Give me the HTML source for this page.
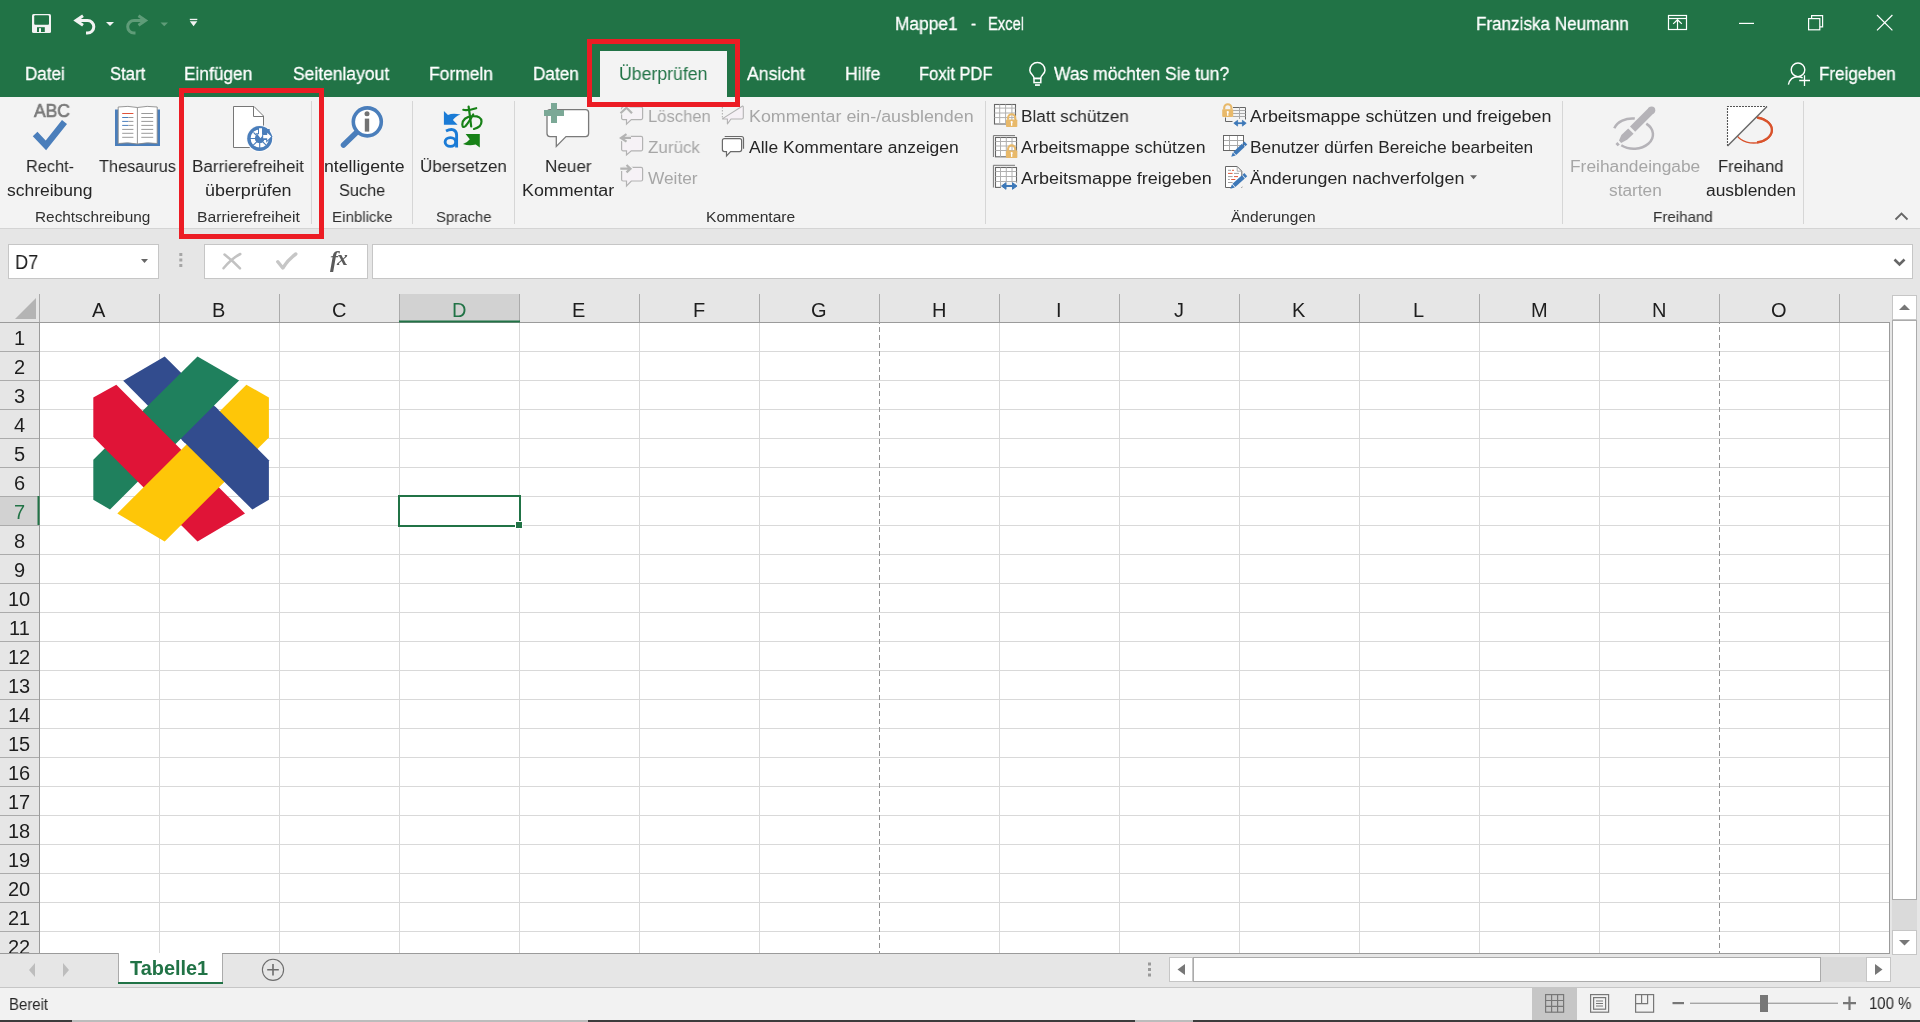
<!DOCTYPE html>
<html><head><meta charset="utf-8"><title>Mappe1 - Excel</title>
<style>
html,body{margin:0;padding:0;}
body{width:1920px;height:1022px;overflow:hidden;position:relative;background:#fff;font-family:"Liberation Sans",sans-serif;}
.r{position:absolute;}
.t{position:absolute;white-space:nowrap;line-height:1;transform-origin:0 0;will-change:transform;}
svg.ic{position:absolute;left:0;top:0;}
</style></head><body>
<div class="r" style="left:0px;top:0px;width:1920px;height:97px;background:#217346;"></div>
<div class="r" style="left:0px;top:97px;width:1920px;height:131px;background:#f3f3f3;"></div>
<div class="r" style="left:0px;top:228px;width:1920px;height:1px;background:#d4d4d4;"></div>
<div class="r" style="left:0px;top:229px;width:1920px;height:66px;background:#e6e6e6;"></div>
<div class="r" style="left:600px;top:51px;width:127px;height:46px;background:#f3f3f3;"></div>
<div class="t" style="left:894.80px;top:14.92px;font-size:18.41px;color:#ffffff;transform:scaleX(0.9423);-webkit-text-stroke:0.3px #fff;">Mappe1</div>
<div class="t" style="left:970.80px;top:14.92px;font-size:18.41px;color:#ffffff;transform:scaleX(0.8109);-webkit-text-stroke:0.3px #fff;">-</div>
<div class="t" style="left:988.20px;top:14.92px;font-size:18.41px;color:#ffffff;transform:scaleX(0.8000);-webkit-text-stroke:0.3px #fff;">Excel</div>
<div class="t" style="left:1475.60px;top:15.02px;font-size:18.41px;color:#ffffff;transform:scaleX(0.9276);-webkit-text-stroke:0.3px #fff;">Franziska Neumann</div>
<div class="t" style="left:25.00px;top:64.66px;font-size:18.12px;color:#ffffff;transform:scaleX(0.9397);-webkit-text-stroke:0.3px #fff;">Datei</div>
<div class="t" style="left:109.75px;top:64.66px;font-size:18.12px;color:#ffffff;transform:scaleX(0.9222);-webkit-text-stroke:0.3px #fff;">Start</div>
<div class="t" style="left:184.20px;top:64.66px;font-size:18.12px;color:#ffffff;transform:scaleX(0.9545);-webkit-text-stroke:0.3px #fff;">Einfügen</div>
<div class="t" style="left:292.60px;top:64.66px;font-size:18.12px;color:#ffffff;transform:scaleX(0.9646);-webkit-text-stroke:0.3px #fff;">Seitenlayout</div>
<div class="t" style="left:428.50px;top:64.66px;font-size:18.12px;color:#ffffff;transform:scaleX(0.9641);-webkit-text-stroke:0.3px #fff;">Formeln</div>
<div class="t" style="left:532.50px;top:64.66px;font-size:18.12px;color:#ffffff;transform:scaleX(0.9469);-webkit-text-stroke:0.3px #fff;">Daten</div>
<div class="t" style="left:747.30px;top:64.66px;font-size:18.12px;color:#ffffff;transform:scaleX(0.9744);-webkit-text-stroke:0.3px #fff;">Ansicht</div>
<div class="t" style="left:844.70px;top:64.66px;font-size:18.12px;color:#ffffff;transform:scaleX(0.9743);-webkit-text-stroke:0.3px #fff;">Hilfe</div>
<div class="t" style="left:919.40px;top:64.66px;font-size:18.12px;color:#ffffff;transform:scaleX(0.9140);-webkit-text-stroke:0.3px #fff;">Foxit PDF</div>
<div class="t" style="left:1053.50px;top:64.66px;font-size:18.12px;color:#ffffff;transform:scaleX(0.9652);-webkit-text-stroke:0.3px #fff;">Was möchten Sie tun?</div>
<div class="t" style="left:1818.75px;top:64.66px;font-size:18.12px;color:#ffffff;transform:scaleX(0.9404);-webkit-text-stroke:0.3px #fff;">Freigeben</div>
<div class="t" style="left:618.90px;top:64.66px;font-size:18.12px;color:#217346;transform:scaleX(0.9761);">Überprüfen</div>
<div class="t" style="left:33.50px;top:101.55px;font-size:18.84px;color:#7a7a7a;transform:scaleX(0.9298);-webkit-text-stroke:0.7px #7a7a7a;">ABC</div>
<div class="t" style="left:26.00px;top:157.70px;font-size:17.25px;color:#262626;transform:scaleX(0.9451);">Recht-</div>
<div class="t" style="left:6.60px;top:181.50px;font-size:17.25px;color:#262626;transform:scaleX(1.0126);">schreibung</div>
<div class="t" style="left:34.50px;top:209.00px;font-size:15.36px;color:#303030;">Rechtschreibung</div>
<div class="t" style="left:99.00px;top:157.70px;font-size:17.25px;color:#262626;transform:scaleX(0.9449);">Thesaurus</div>
<div class="t" style="left:191.90px;top:157.70px;font-size:17.25px;color:#262626;transform:scaleX(0.9891);">Barrierefreiheit</div>
<div class="t" style="left:204.70px;top:181.50px;font-size:17.25px;color:#262626;transform:scaleX(1.0373);">überprüfen</div>
<div class="t" style="left:196.80px;top:209.00px;font-size:15.36px;color:#303030;transform:scaleX(1.0221);">Barrierefreiheit</div>
<div class="t" style="left:324.30px;top:157.70px;font-size:17.25px;color:#262626;transform:scaleX(1.0249);">ntelligente</div>
<div class="t" style="left:338.80px;top:181.50px;font-size:17.25px;color:#262626;transform:scaleX(0.9449);">Suche</div>
<div class="t" style="left:331.50px;top:209.00px;font-size:15.36px;color:#303030;transform:scaleX(0.9846);">Einblicke</div>
<div class="t" style="left:419.80px;top:157.70px;font-size:17.25px;color:#262626;transform:scaleX(0.9851);">Übersetzen</div>
<div class="t" style="left:435.60px;top:209.00px;font-size:15.36px;color:#303030;transform:scaleX(0.9699);">Sprache</div>
<div class="t" style="left:544.80px;top:157.70px;font-size:17.25px;color:#262626;transform:scaleX(0.9894);">Neuer</div>
<div class="t" style="left:521.90px;top:181.50px;font-size:17.25px;color:#262626;transform:scaleX(1.0341);">Kommentar</div>
<div class="t" style="left:647.60px;top:107.60px;font-size:17.25px;color:#a6a6a6;transform:scaleX(0.9633);">Löschen</div>
<div class="t" style="left:647.60px;top:138.70px;font-size:17.25px;color:#a6a6a6;transform:scaleX(0.9853);">Zurück</div>
<div class="t" style="left:647.60px;top:169.70px;font-size:17.25px;color:#a6a6a6;transform:scaleX(1.0021);">Weiter</div>
<div class="t" style="left:748.70px;top:107.60px;font-size:17.25px;color:#a6a6a6;transform:scaleX(1.0365);">Kommentar ein-/ausblenden</div>
<div class="t" style="left:748.70px;top:138.70px;font-size:17.25px;color:#262626;transform:scaleX(1.0128);">Alle Kommentare anzeigen</div>
<div class="t" style="left:705.80px;top:209.00px;font-size:15.36px;color:#303030;transform:scaleX(1.0142);">Kommentare</div>
<div class="t" style="left:1020.90px;top:107.60px;font-size:17.25px;color:#262626;transform:scaleX(0.9953);">Blatt schützen</div>
<div class="t" style="left:1020.90px;top:138.70px;font-size:17.25px;color:#262626;transform:scaleX(1.0232);">Arbeitsmappe schützen</div>
<div class="t" style="left:1020.90px;top:169.70px;font-size:17.25px;color:#262626;transform:scaleX(1.0417);">Arbeitsmappe freigeben</div>
<div class="t" style="left:1249.60px;top:107.60px;font-size:17.25px;color:#262626;transform:scaleX(1.0375);">Arbeitsmappe schützen und freigeben</div>
<div class="t" style="left:1249.60px;top:138.70px;font-size:17.25px;color:#262626;transform:scaleX(1.0046);">Benutzer dürfen Bereiche bearbeiten</div>
<div class="t" style="left:1249.60px;top:169.70px;font-size:17.25px;color:#262626;transform:scaleX(1.0346);">Änderungen nachverfolgen</div>
<div class="t" style="left:1231.30px;top:209.00px;font-size:15.36px;color:#303030;transform:scaleX(1.0116);">Änderungen</div>
<div class="t" style="left:1569.80px;top:157.70px;font-size:17.25px;color:#a6a6a6;transform:scaleX(1.0059);">Freihandeingabe</div>
<div class="t" style="left:1608.50px;top:181.50px;font-size:17.25px;color:#a6a6a6;transform:scaleX(1.0021);">starten</div>
<div class="t" style="left:1718.20px;top:157.70px;font-size:17.25px;color:#262626;transform:scaleX(0.9612);">Freihand</div>
<div class="t" style="left:1705.60px;top:181.50px;font-size:17.25px;color:#262626;transform:scaleX(1.0094);">ausblenden</div>
<div class="t" style="left:1652.80px;top:209.00px;font-size:15.36px;color:#303030;transform:scaleX(0.9867);">Freihand</div>
<div class="r" style="left:8px;top:244px;width:151px;height:35px;background:#fff;box-sizing:border-box;border:1px solid #c6c6c6;"></div>
<div class="r" style="left:204px;top:244px;width:164px;height:35px;background:#fff;box-sizing:border-box;border:1px solid #c6c6c6;"></div>
<div class="r" style="left:372px;top:244px;width:1541px;height:35px;background:#fff;box-sizing:border-box;border:1px solid #c6c6c6;"></div>
<div class="t" style="left:329.5px;top:247px;font-family:'Liberation Serif';font-style:italic;font-weight:bold;font-size:24px;color:#5a5a5a;">f</div>
<div class="t" style="left:337px;top:247.5px;font-family:'Liberation Serif';font-style:italic;font-weight:bold;font-size:21.5px;color:#5a5a5a;">x</div>
<div class="t" style="left:15.00px;top:253.19px;font-size:19.86px;color:#1e1e1e;transform:scaleX(0.9207);">D7</div>
<div class="r" style="left:0px;top:294px;width:1920px;height:29px;background:#e6e6e6;"></div>
<div class="r" style="left:40px;top:323px;width:1849px;height:630px;background:#ffffff;"></div>
<div class="r" style="left:0px;top:323px;width:39px;height:630px;background:#e6e6e6;"></div>
<div class="r" style="left:399px;top:294px;width:120px;height:28px;background:#d2d2d2;"></div>
<div class="r" style="left:0px;top:496px;width:39px;height:29px;background:#d2d2d2;"></div>
<div class="t" style="left:92.30px;top:299.77px;font-size:20.00px;color:#1e1e1e;">A</div>
<div class="t" style="left:212.35px;top:299.77px;font-size:20.00px;color:#1e1e1e;">B</div>
<div class="t" style="left:331.80px;top:299.77px;font-size:20.00px;color:#1e1e1e;">C</div>
<div class="t" style="left:451.80px;top:299.77px;font-size:20.00px;color:#217346;">D</div>
<div class="t" style="left:572.35px;top:299.77px;font-size:20.00px;color:#1e1e1e;">E</div>
<div class="t" style="left:692.90px;top:299.77px;font-size:20.00px;color:#1e1e1e;">F</div>
<div class="t" style="left:811.20px;top:299.77px;font-size:20.00px;color:#1e1e1e;">G</div>
<div class="t" style="left:931.80px;top:299.77px;font-size:20.00px;color:#1e1e1e;">H</div>
<div class="t" style="left:1056.20px;top:299.77px;font-size:20.00px;color:#1e1e1e;">I</div>
<div class="t" style="left:1174.00px;top:299.77px;font-size:20.00px;color:#1e1e1e;">J</div>
<div class="t" style="left:1292.35px;top:299.77px;font-size:20.00px;color:#1e1e1e;">K</div>
<div class="t" style="left:1413.45px;top:299.77px;font-size:20.00px;color:#1e1e1e;">L</div>
<div class="t" style="left:1530.65px;top:299.77px;font-size:20.00px;color:#1e1e1e;">M</div>
<div class="t" style="left:1651.80px;top:299.77px;font-size:20.00px;color:#1e1e1e;">N</div>
<div class="t" style="left:1771.20px;top:299.77px;font-size:20.00px;color:#1e1e1e;">O</div>
<div class="t" style="left:13.95px;top:327.67px;font-size:20.00px;color:#1e1e1e;">1</div>
<div class="t" style="left:13.95px;top:356.67px;font-size:20.00px;color:#1e1e1e;">2</div>
<div class="t" style="left:13.95px;top:385.67px;font-size:20.00px;color:#1e1e1e;">3</div>
<div class="t" style="left:13.95px;top:414.67px;font-size:20.00px;color:#1e1e1e;">4</div>
<div class="t" style="left:13.95px;top:443.67px;font-size:20.00px;color:#1e1e1e;">5</div>
<div class="t" style="left:13.95px;top:472.67px;font-size:20.00px;color:#1e1e1e;">6</div>
<div class="t" style="left:13.95px;top:501.67px;font-size:20.00px;color:#217346;">7</div>
<div class="t" style="left:13.95px;top:530.67px;font-size:20.00px;color:#1e1e1e;">8</div>
<div class="t" style="left:13.95px;top:559.67px;font-size:20.00px;color:#1e1e1e;">9</div>
<div class="t" style="left:8.40px;top:588.67px;font-size:20.00px;color:#1e1e1e;">10</div>
<div class="t" style="left:9.10px;top:617.67px;font-size:20.00px;color:#1e1e1e;">11</div>
<div class="t" style="left:8.40px;top:646.67px;font-size:20.00px;color:#1e1e1e;">12</div>
<div class="t" style="left:8.40px;top:675.67px;font-size:20.00px;color:#1e1e1e;">13</div>
<div class="t" style="left:8.40px;top:704.67px;font-size:20.00px;color:#1e1e1e;">14</div>
<div class="t" style="left:8.40px;top:733.67px;font-size:20.00px;color:#1e1e1e;">15</div>
<div class="t" style="left:8.40px;top:762.67px;font-size:20.00px;color:#1e1e1e;">16</div>
<div class="t" style="left:8.40px;top:791.67px;font-size:20.00px;color:#1e1e1e;">17</div>
<div class="t" style="left:8.40px;top:820.67px;font-size:20.00px;color:#1e1e1e;">18</div>
<div class="t" style="left:8.40px;top:849.67px;font-size:20.00px;color:#1e1e1e;">19</div>
<div class="t" style="left:8.40px;top:878.67px;font-size:20.00px;color:#1e1e1e;">20</div>
<div class="t" style="left:8.40px;top:907.67px;font-size:20.00px;color:#1e1e1e;">21</div>
<div class="t" style="left:8.40px;top:936.67px;font-size:20.00px;color:#1e1e1e;">22</div>
<div class="r" style="left:1890px;top:295px;width:30px;height:660px;background:#e6e6e6;"></div>
<div class="r" style="left:1892px;top:295px;width:25px;height:25px;background:#fff;box-sizing:border-box;border:1px solid #c6c6c6;"></div>
<div class="r" style="left:1892px;top:320px;width:25px;height:580px;background:#fff;box-sizing:border-box;border:1px solid #ababab;"></div>
<div class="r" style="left:1892px;top:900px;width:25px;height:30px;background:#dadada;"></div>
<div class="r" style="left:1892px;top:930px;width:25px;height:25px;background:#fff;box-sizing:border-box;border:1px solid #c6c6c6;"></div>
<div class="r" style="left:0px;top:953px;width:1890px;height:35px;background:#e6e6e6;"></div>
<div class="r" style="left:1890px;top:955px;width:30px;height:33px;background:#e6e6e6;"></div>
<div class="r" style="left:118px;top:953px;width:105px;height:31px;background:#fff;box-sizing:border-box;border-left:1px solid #ababab;border-right:1px solid #ababab;"></div>
<div class="r" style="left:118px;top:982px;width:105px;height:2px;background:#217346;"></div>
<div class="t" style="left:130.20px;top:958.52px;font-size:19.71px;color:#217346;font-weight:bold;transform:scaleX(1.0108);">Tabelle1</div>
<div class="r" style="left:1169px;top:957px;width:24px;height:25px;background:#fff;box-sizing:border-box;border:1px solid #c6c6c6;"></div>
<div class="r" style="left:1193px;top:957px;width:628px;height:25px;background:#fff;box-sizing:border-box;border:1px solid #ababab;"></div>
<div class="r" style="left:1821px;top:957px;width:45px;height:25px;background:#dadada;"></div>
<div class="r" style="left:1866px;top:957px;width:25px;height:25px;background:#fff;box-sizing:border-box;border:1px solid #c6c6c6;"></div>
<div class="r" style="left:0px;top:988px;width:1920px;height:32px;background:#f2f2f2;"></div>
<div class="t" style="left:9.00px;top:995.58px;font-size:16.09px;color:#262626;transform:scaleX(0.9289);">Bereit</div>
<div class="r" style="left:1532px;top:988px;width:45px;height:32px;background:#c6c6c6;"></div>
<div class="t" style="left:1869.30px;top:995.71px;font-size:15.94px;color:#262626;transform:scaleX(0.9381);">100 %</div>
<div class="r" style="left:0px;top:1020px;width:1920px;height:2px;background:#3c3c3c;"></div>
<div class="r" style="left:72px;top:1020px;width:516px;height:2px;background:#bcbcbc;"></div>
<div class="r" style="left:1135px;top:1020px;width:58px;height:2px;background:#bcbcbc;"></div>
<svg class="ic" width="1920" height="1022">
<g fill="#f3f3f3">
<rect x="32" y="14" width="19" height="19" rx="1.5"/>
<rect x="34.2" y="15.2" width="14.8" height="9.6" rx="1" fill="#217346"/>
<rect x="37" y="27.2" width="7.8" height="4.8" fill="#217346"/>
<rect x="39" y="28.2" width="2" height="3.8"/>
</g>
<g fill="none" stroke="#f3f3f3" stroke-width="3">
<path d="M83 15.8 L76 20.5 L83 25.2"/><path d="M76 20.5 H87.5 A6.3 6.3 0 0 1 87.5 33.1 H86"/>
</g>
<polygon points="106,22 114,22 110,26" fill="#f3f3f3"/>
<g fill="none" stroke="#5f9c78" stroke-width="3">
<path d="M138.5 15.8 L145.5 20.5 L138.5 25.2"/><path d="M145.5 20.5 H134 A6.3 6.3 0 0 0 134 33.1 H135.5"/>
</g>
<polygon points="160.5,22.5 168,22.5 164.25,26.2" fill="#5f9c78"/>
<rect x="189.8" y="18.8" width="7.5" height="1.3" fill="#f3f3f3"/><polygon points="189.8,21.3 197.3,21.3 193.55,26.3" fill="#f3f3f3"/>
<g fill="none" stroke="#ffffff" stroke-width="1.2">
<rect x="1668.5" y="15.5" width="18" height="14"/><line x1="1668" y1="18.5" x2="1687" y2="18.5"/>
<path d="M1677.5 29.5 V19.8 M1673.2 23.9 L1677.5 19.7 L1681.8 23.9"/>
<line x1="1739" y1="23.4" x2="1754" y2="23.4"/>
<rect x="1808.6" y="18.6" width="11.2" height="11.2"/><path d="M1811.6 18.6 V15.6 H1822.6 V26.8 H1819.8"/>
<path d="M1877 15 L1892.4 30.4 M1892.4 15 L1877 30.4"/>
</g>
<g fill="none" stroke="#ffffff" stroke-width="1.5">
<path d="M1034.2 78.4 C1034 75.5 1029.8 73.8 1029.8 70.2 A7.6 7.6 0 1 1 1045 70.2 C1045 73.8 1040.8 75.5 1040.6 78.4 Z"/>
<rect x="1034" y="78.4" width="6.8" height="4.2"/>
<rect x="1035" y="84.2" width="4.9" height="1.7" fill="#fff" stroke="none"/>
</g>
<g fill="none" stroke="#ffffff" stroke-width="1.4">
<circle cx="1798" cy="69.8" r="6.8"/><path d="M1788.4 84.6 C1789.5 80 1793 76.8 1797.8 76.8 C1799.8 76.8 1801.3 77.2 1802.6 77.9"/>
<path d="M1804.5 75.2 V86 M1799.2 80.5 H1810" stroke-width="1.3"/>
</g>
<line x1="311.5" y1="101" x2="311.5" y2="224" stroke="#d6d6d6" stroke-width="1"/>
<line x1="412.5" y1="101" x2="412.5" y2="224" stroke="#d6d6d6" stroke-width="1"/>
<line x1="514.5" y1="101" x2="514.5" y2="224" stroke="#d6d6d6" stroke-width="1"/>
<line x1="985.5" y1="101" x2="985.5" y2="224" stroke="#d6d6d6" stroke-width="1"/>
<line x1="1562.5" y1="101" x2="1562.5" y2="224" stroke="#d6d6d6" stroke-width="1"/>
<line x1="1803.5" y1="101" x2="1803.5" y2="224" stroke="#d6d6d6" stroke-width="1"/>
<polyline points="35.1,134 45.9,145.4 64.5,122" fill="none" stroke="#4a7ebb" stroke-width="6.4" stroke-linejoin="miter"/>
<rect x="115" y="109.5" width="45" height="36.5" fill="#4a7ebb"/>
<path d="M118.2 107 Q128 105.5 137.4 107.5 Q147 105.5 157.2 107 V143.5 Q147 142 137.4 144 Q128 142 118.2 143.5 Z" fill="#fff" stroke="#8a8a8a" stroke-width="0.9"/>
<line x1="137.4" y1="107.5" x2="137.4" y2="144" stroke="#8a8a8a" stroke-width="0.9"/>
<line x1="122.2" y1="113.5" x2="133.4" y2="113.5" stroke="#e0533a" stroke-width="1"/>
<line x1="141.3" y1="113.5" x2="153.2" y2="113.5" stroke="#9a9a9a" stroke-width="1"/>
<line x1="122.2" y1="117.5" x2="128.5" y2="117.5" stroke="#4a7ebb" stroke-width="1"/><line x1="128.5" y1="117.5" x2="133.4" y2="117.5" stroke="#9a9a9a" stroke-width="1"/>
<line x1="141.3" y1="117.5" x2="153.2" y2="117.5" stroke="#9a9a9a" stroke-width="1"/>
<line x1="122.2" y1="121.4" x2="128.5" y2="121.4" stroke="#4a7ebb" stroke-width="1"/><line x1="128.5" y1="121.4" x2="133.4" y2="121.4" stroke="#9a9a9a" stroke-width="1"/>
<line x1="141.3" y1="121.4" x2="153.2" y2="121.4" stroke="#9a9a9a" stroke-width="1"/>
<line x1="122.2" y1="125.4" x2="128.5" y2="125.4" stroke="#4a7ebb" stroke-width="1"/><line x1="128.5" y1="125.4" x2="133.4" y2="125.4" stroke="#9a9a9a" stroke-width="1"/>
<line x1="141.3" y1="125.4" x2="153.2" y2="125.4" stroke="#9a9a9a" stroke-width="1"/>
<line x1="122.2" y1="129.4" x2="133.4" y2="129.4" stroke="#9a9a9a" stroke-width="1"/>
<line x1="141.3" y1="129.4" x2="153.2" y2="129.4" stroke="#9a9a9a" stroke-width="1"/>
<line x1="122.2" y1="133.3" x2="133.4" y2="133.3" stroke="#9a9a9a" stroke-width="1"/>
<line x1="141.3" y1="133.3" x2="153.2" y2="133.3" stroke="#9a9a9a" stroke-width="1"/>
<line x1="122.2" y1="137.3" x2="133.4" y2="137.3" stroke="#9a9a9a" stroke-width="1"/>
<line x1="141.3" y1="137.3" x2="153.2" y2="137.3" stroke="#9a9a9a" stroke-width="1"/>
<path d="M233.5 106.5 H254 L263.5 116 V147.5 H233.5 Z" fill="#fff" stroke="#777" stroke-width="1"/>
<path d="M253.5 106.5 V116.5 H263.5" fill="none" stroke="#777" stroke-width="1"/>
<circle cx="259.7" cy="138.5" r="13.5" fill="#fbfbfb"/>
<circle cx="259.7" cy="138.5" r="12.5" fill="#4a7ebb"/>
<circle cx="259.7" cy="138.5" r="6.9" fill="none" stroke="#fff" stroke-width="4.4"/>
<rect x="260.2" y="129" width="9.5" height="7.5" fill="#4a7ebb"/>
<path d="M250 138.5 H256 M253.5 132.4 L256 135.2 M253.3 145.2 L257 141.5 M259.7 142.5 V148 M266.1 145.2 L262.4 141.5 M262.8 139.4 H268.8" stroke="#4a7ebb" stroke-width="1.1" fill="none"/>
<circle cx="259.7" cy="138.5" r="4.6" fill="#4a7ebb"/>
<path d="M259 128.3 H262 V134.3 H263.6 L260.5 138.2 L257.4 134.3 H259 Z" fill="#fff" stroke="#4a7ebb" stroke-width="2" paint-order="stroke"/>
<path d="M263.2 134.9 H267.2 V132.8 L271.2 136.6 L267.2 140.4 V138.2 H263.2 Z" fill="#fff" stroke="#4a7ebb" stroke-width="2" paint-order="stroke"/>
<line x1="343.5" y1="145" x2="357.5" y2="131.5" stroke="#4a7ebb" stroke-width="5.5" stroke-linecap="round"/>
<circle cx="367.3" cy="121.85" r="14" fill="#fff" stroke="#4a7ebb" stroke-width="3.6"/>
<circle cx="367" cy="113.8" r="2.5" fill="#737373"/><rect x="364.8" y="118.6" width="4.4" height="13" fill="#737373"/>
<path d="M443.9 111.1 L448 115 Q452.5 112.6 460.5 114.5 Q455 116.5 452.9 120.1 L457.6 124.7 H443.9 Z" fill="#1a7bd6"/>
<path d="M446 131 Q450 129 453.5 129.8 Q456.6 131 456.6 135 V147.5" fill="none" stroke="#1a7bd6" stroke-width="2.9"/>
<ellipse cx="450.4" cy="142" rx="5.3" ry="4.4" fill="none" stroke="#1a7bd6" stroke-width="2.9"/>
<path d="M465.6 134 H479.8 V147.5 L475.7 144.6 Q469 146.2 463 144.1 Q467.6 142.2 469.8 139.2 Z" fill="#178117"/>
<g fill="none" stroke="#178117" stroke-width="2.2" stroke-linecap="round">
<path d="M463.3 109.8 Q467 111 476.2 108.2"/><path d="M468.6 106.5 Q470 116 471.2 126.5"/>
<path d="M473.2 114.5 Q469 122 465.6 126 Q462.5 128.5 462.3 124.5 Q462.8 117 472.5 116.2 Q481.5 115.8 481.5 121.5 Q481.5 127 474 129"/>
</g>
<path d="M550 109.6 H585.6 A3 3 0 0 1 588.6 112.6 V133.6 A3 3 0 0 1 585.6 136.6 H566 L556.3 146.5 V136.6 H550 A3 3 0 0 1 547 133.6 V112.6 A3 3 0 0 1 550 109.6 Z" fill="#fff" stroke="#7a7a7a" stroke-width="1.3"/>
<path d="M551 103 H557 V110 H564 V116 H557 V123 H551 V116 H544 V110 H551 Z" fill="#7ba896"/>
<path d="M623.1 107 H641.1 A1.5 1.5 0 0 1 642.6 108.5 V118.1 A1.5 1.5 0 0 1 641.1 119.6 H631.3 L626.5 124.2 V119.6 H623.1 A1.5 1.5 0 0 1 621.6 118.1 V108.5 A1.5 1.5 0 0 1 623.1 107 Z" fill="#f6f2f6" stroke="#b3b3b3" stroke-width="1.2"/>
<path d="M620.5 113.3 L626.5 107.8 L632 113.3" fill="none" stroke="#f3f3f3" stroke-width="4.6"/>
<path d="M620.5 113.3 L626.5 107.8 L632 113.3" fill="none" stroke="#b3b3b3" stroke-width="2.2"/>
<path d="M623.1 136.4 H641.1 A1.5 1.5 0 0 1 642.6 137.9 V149.3 A1.5 1.5 0 0 1 641.1 150.8 H631.3 L626.5 155 V150.8 H623.1 A1.5 1.5 0 0 1 621.6 149.3 V137.9 A1.5 1.5 0 0 1 623.1 136.4 Z" fill="#f6f2f6" stroke="#b3b3b3" stroke-width="1.2"/>
<path d="M631 137.9 H621 M626.5 134.2 L621 137.9 L626.5 141.6" fill="none" stroke="#f3f3f3" stroke-width="4.6"/>
<path d="M631 137.9 H621 M626.5 134.2 L621 137.9 L626.5 141.6" fill="none" stroke="#b3b3b3" stroke-width="2.2"/>
<path d="M623.1 167.4 H641.1 A1.5 1.5 0 0 1 642.6 168.9 V179.5 A1.5 1.5 0 0 1 641.1 181 H631.3 L626.5 186 V181 H623.1 A1.5 1.5 0 0 1 621.6 179.5 V168.9 A1.5 1.5 0 0 1 623.1 167.4 Z" fill="#f6f2f6" stroke="#b3b3b3" stroke-width="1.2"/>
<path d="M620.3 168.7 H630.5 M626.5 165 L630.5 168.7 L626.5 172.4" fill="none" stroke="#f3f3f3" stroke-width="4.6"/>
<path d="M620.3 168.7 H630.5 M626.5 165 L630.5 168.7 L626.5 172.4" fill="none" stroke="#b3b3b3" stroke-width="2.2"/>
<path d="M722.6 118.6 L742.6 106 A1 1 0 0 1 743.3 107 V117.5 A1.5 1.5 0 0 1 741.8 119 H731 L727.4 123.8 V119 H722.6 Z" fill="#f6f1f6" stroke="#b3b3b3" stroke-width="1.1" stroke-linejoin="round"/>
<path d="M722.4 107 V117.8" fill="none" stroke="#b3b3b3" stroke-width="1.1" stroke-dasharray="1.6 1.4"/>
<path d="M724.7 136.5 H741.5 A2 2 0 0 1 743.5 138.5 V148.8" fill="none" stroke="#6a6a6a" stroke-width="1.2"/>
<path d="M724.4 138.6 H739.6 A2 2 0 0 1 741.6 140.6 V149.6 A2 2 0 0 1 739.6 151.6 H730.6 L726.5 156 V151.6 H724.4 A2 2 0 0 1 722.4 149.6 V140.6 A2 2 0 0 1 724.4 138.6 Z" fill="#fff" stroke="#6a6a6a" stroke-width="1.2"/>
<rect x="994.5" y="104.5" width="21.0" height="19.5" fill="#fff" stroke="#666" stroke-width="1.1"/><line x1="999.7" y1="104.5" x2="999.7" y2="124" stroke="#b0b0b0" stroke-width="1"/><line x1="1005.6" y1="104.5" x2="1005.6" y2="124" stroke="#b0b0b0" stroke-width="1"/><line x1="1011.9" y1="104.5" x2="1011.9" y2="124" stroke="#b0b0b0" stroke-width="1"/><line x1="994.5" y1="108.1" x2="1015.5" y2="108.1" stroke="#b0b0b0" stroke-width="1"/><line x1="994.5" y1="113" x2="1015.5" y2="113" stroke="#b0b0b0" stroke-width="1"/><line x1="994.5" y1="117.6" x2="1015.5" y2="117.6" stroke="#b0b0b0" stroke-width="1"/>
<path d="M1008.1 119.7 V117.80000000000001 A3.55 3.55 0 0 1 1015.2 117.80000000000001 V119.7" fill="none" stroke="#e8b96a" stroke-width="2.1"/><rect x="1006" y="119.4" width="11.3" height="7.6" rx="0.8" fill="#e8b96a"/><rect x="1011" y="122.0" width="1.3" height="3.8" fill="#fff"/><circle cx="1011.65" cy="122.0" r="1.1" fill="#fff"/>
<path d="M993.4 157 V135.6 H1015" fill="none" stroke="#777" stroke-width="1"/>
<rect x="995.5" y="137.5" width="21.0" height="19.30000000000001" fill="#fff" stroke="#666" stroke-width="1.1"/><line x1="1000.5" y1="137.5" x2="1000.5" y2="156.8" stroke="#b0b0b0" stroke-width="1"/><line x1="1006.3" y1="137.5" x2="1006.3" y2="156.8" stroke="#b0b0b0" stroke-width="1"/><line x1="1012" y1="137.5" x2="1012" y2="156.8" stroke="#b0b0b0" stroke-width="1"/><line x1="995.5" y1="141.5" x2="1016.5" y2="141.5" stroke="#b0b0b0" stroke-width="1"/><line x1="995.5" y1="146" x2="1016.5" y2="146" stroke="#b0b0b0" stroke-width="1"/><line x1="995.5" y1="150.5" x2="1016.5" y2="150.5" stroke="#b0b0b0" stroke-width="1"/>
<path d="M1008.1 150.8 V148.9 A3.55 3.55 0 0 1 1015.2 148.9 V150.8" fill="none" stroke="#e8b96a" stroke-width="2.1"/><rect x="1006" y="150.5" width="11.3" height="7.6" rx="0.8" fill="#e8b96a"/><rect x="1011" y="153.1" width="1.3" height="3.8" fill="#fff"/><circle cx="1011.65" cy="153.1" r="1.1" fill="#fff"/>
<path d="M993.4 187.5 V165.3 H1015" fill="none" stroke="#777" stroke-width="1"/>
<rect x="995.5" y="167.5" width="21.0" height="19.900000000000006" fill="#fff" stroke="#666" stroke-width="1.1"/><line x1="1000.5" y1="167.5" x2="1000.5" y2="187.4" stroke="#b0b0b0" stroke-width="1"/><line x1="1006.3" y1="167.5" x2="1006.3" y2="187.4" stroke="#b0b0b0" stroke-width="1"/><line x1="1012" y1="167.5" x2="1012" y2="187.4" stroke="#b0b0b0" stroke-width="1"/><line x1="995.5" y1="171.5" x2="1016.5" y2="171.5" stroke="#b0b0b0" stroke-width="1"/><line x1="995.5" y1="176.5" x2="1016.5" y2="176.5" stroke="#b0b0b0" stroke-width="1"/><line x1="995.5" y1="181.5" x2="1016.5" y2="181.5" stroke="#b0b0b0" stroke-width="1"/>
<rect x="1001" y="182.5" width="16.5" height="7" fill="#f3f3f3"/>
<path d="M1002.5 186 H1016" stroke="#3d78b8" stroke-width="2" fill="none"/><path d="M1001.5 186 L1006.0 182.7 V189.3 Z M1017 186 L1012.5 182.7 V189.3 Z" fill="#3d78b8" stroke="#3d78b8" stroke-width="1" stroke-linejoin="round"/>
<path d="M1225.5 117.5 V121.5 H1232.5" fill="none" stroke="#666" stroke-width="1"/>
<path d="M1233 107.5 H1245.5 V119.5" fill="none" stroke="#666" stroke-width="1"/>
<path d="M1239.5 107.5 V119 M1233 110.5 H1245.5 M1233 113.5 H1245.5 M1233 116.5 H1245.5" fill="none" stroke="#aaa" stroke-width="1"/>
<path d="M1224.2 109.5 V107.8 A3.6 3.6 0 0 1 1231.4 107.8 V109.5" fill="none" stroke="#e8b96a" stroke-width="2.1"/>
<rect x="1222.2" y="109.3" width="11" height="7.6" rx="0.8" fill="#e8b96a"/>
<rect x="1227.1" y="112" width="1.3" height="3.8" fill="#fff"/><circle cx="1227.75" cy="112" r="1.1" fill="#fff"/>
<path d="M1235.5 123.2 H1244.5" stroke="#3d78b8" stroke-width="1.8" fill="none"/>
<path d="M1233.8 123.2 L1237.6 120.3 V126.1 Z M1246.2 123.2 L1242.4 120.3 V126.1 Z" fill="#3d78b8" stroke="#3d78b8" stroke-width="0.8" stroke-linejoin="round"/>
<rect x="1223.5" y="135.5" width="20" height="15" fill="#fff" stroke="#666" stroke-width="1"/>
<path d="M1229.5 136 V150 M1237.5 136 V150 M1224 140.5 H1243 M1224 145.5 H1243" fill="none" stroke="#aaa" stroke-width="1"/>
<polygon points="1232,157 1246.5,143.5 1246.5,150 1238,157" fill="#f3f3f3"/>
<g transform="translate(1231.2 156.8) rotate(-43.39)" fill="#3d78b8"><polygon points="0,0 4.2,-2.1 4.2,2.1"/><rect x="4.9" y="-2.1" width="11.89" height="4.2"/><rect x="17.49" y="-2.1" width="2.6" height="4.2"/></g>
<path d="M1225.5 166.5 H1237.2 L1241.8 171.2 V187.5 H1225.5 Z" fill="#fff" stroke="#666" stroke-width="1"/>
<path d="M1237.2 166.5 V171.2 H1241.8" fill="none" stroke="#999" stroke-width="0.8"/>
<line x1="1228" y1="170.3" x2="1231" y2="170.3" stroke="#a0a0a0" stroke-width="1"/>
<line x1="1232" y1="170.3" x2="1234" y2="170.3" stroke="#e05a3a" stroke-width="1"/>
<line x1="1228" y1="173.4" x2="1232.6" y2="173.4" stroke="#e05a3a" stroke-width="1"/>
<line x1="1234" y1="173.4" x2="1239" y2="173.4" stroke="#a0a0a0" stroke-width="1"/>
<line x1="1228" y1="176.6" x2="1232.6" y2="176.6" stroke="#a0a0a0" stroke-width="1"/>
<line x1="1234" y1="176.6" x2="1238" y2="176.6" stroke="#e05a3a" stroke-width="1"/>
<line x1="1228" y1="179.5" x2="1229.8" y2="179.5" stroke="#a0a0a0" stroke-width="1"/>
<line x1="1231.2" y1="179.5" x2="1235.3" y2="179.5" stroke="#e05a3a" stroke-width="1"/>
<line x1="1228" y1="182.5" x2="1232.6" y2="182.5" stroke="#a0a0a0" stroke-width="1"/>
<polygon points="1231,189 1246.5,174 1246.5,182 1240,189" fill="#f3f3f3"/>
<g transform="translate(1230.3 188.7) rotate(-42.29)" fill="#3d78b8"><polygon points="0,0 4.2,-2.1 4.2,2.1"/><rect x="4.9" y="-2.1" width="12.75" height="4.2"/><rect x="18.35" y="-2.1" width="2.6" height="4.2"/></g>
<polygon points="1470,175.3 1477,175.3 1473.5,179.3" fill="#666"/>
<path d="M1614.3 128.3 A19 14.2 0 0 1 1634.8 118.6" fill="none" stroke="#b5b3b8" stroke-width="2.5"/>
<path d="M1646.3 123.6 A19 14.2 0 1 1 1621.3 145.3" fill="none" stroke="#b5b3b8" stroke-width="2.5"/>
<line x1="1651.6" y1="110.2" x2="1631.9" y2="129.9" stroke="#f3f3f3" stroke-width="10"/>
<line x1="1651.6" y1="110.2" x2="1632.6" y2="129.2" stroke="#b5b3b8" stroke-width="7.4"/>
<circle cx="1651.6" cy="110.2" r="3.7" fill="#b5b3b8"/>
<polygon points="1628.2,128.4 1633.6,133.8 1627.1,139.8 1621.1,143.1 1619,140.6 1621.4,135" fill="#b5b3b8"/>
<polygon points="1617.4,142 1619.8,144.4 1617.6,146.3 1615.5,144.1" fill="#b5b3b8"/>
<ellipse cx="1753.8" cy="130" rx="18.6" ry="13" fill="none" stroke="#d9532c" stroke-width="1.3"/>
<path d="M1757 117.6 A18 12.6 0 0 1 1757 142.4" fill="none" stroke="#d9532c" stroke-width="2.2"/>
<polygon points="1727.5,106.5 1767,106.5 1727.5,146" fill="#fff"/>
<path d="M1727.5 146 V106.5 H1767" fill="none" stroke="#555" stroke-width="1.1" stroke-dasharray="2 1"/>
<line x1="1767" y1="106.5" x2="1727.5" y2="146" stroke="#666" stroke-width="1.5"/>
<path d="M1895.5 219.5 L1901.5 213.5 L1907.5 219.5" fill="none" stroke="#666" stroke-width="1.8"/>
<polygon points="141,259 148,259 144.5,263" fill="#666"/>
<rect x="179.3" y="253" width="3" height="3" fill="#a6a6a6"/>
<rect x="179.3" y="258.5" width="3" height="3" fill="#a6a6a6"/>
<rect x="179.3" y="264" width="3" height="3" fill="#a6a6a6"/>
<path d="M223.5 268.2 Q232 258 240.3 254 M224.5 254.5 Q233 261 240 268.3" fill="none" stroke="#c2c2c2" stroke-width="2.5" stroke-linecap="round"/>
<path d="M277.8 261.8 L282.8 268 Q288 259.5 295.8 254" fill="none" stroke="#c6c6c6" stroke-width="3.4" stroke-linecap="round" stroke-linejoin="round"/>
<path d="M1894.5 259.5 L1899.5 264.5 L1904.5 259.5" fill="none" stroke="#666" stroke-width="2.6"/>
<line x1="40" y1="351.5" x2="1889" y2="351.5" stroke="#d9d9d9" stroke-width="1"/>
<line x1="40" y1="380.5" x2="1889" y2="380.5" stroke="#d9d9d9" stroke-width="1"/>
<line x1="40" y1="409.5" x2="1889" y2="409.5" stroke="#d9d9d9" stroke-width="1"/>
<line x1="40" y1="438.5" x2="1889" y2="438.5" stroke="#d9d9d9" stroke-width="1"/>
<line x1="40" y1="467.5" x2="1889" y2="467.5" stroke="#d9d9d9" stroke-width="1"/>
<line x1="40" y1="496.5" x2="1889" y2="496.5" stroke="#d9d9d9" stroke-width="1"/>
<line x1="40" y1="525.5" x2="1889" y2="525.5" stroke="#d9d9d9" stroke-width="1"/>
<line x1="40" y1="554.5" x2="1889" y2="554.5" stroke="#d9d9d9" stroke-width="1"/>
<line x1="40" y1="583.5" x2="1889" y2="583.5" stroke="#d9d9d9" stroke-width="1"/>
<line x1="40" y1="612.5" x2="1889" y2="612.5" stroke="#d9d9d9" stroke-width="1"/>
<line x1="40" y1="641.5" x2="1889" y2="641.5" stroke="#d9d9d9" stroke-width="1"/>
<line x1="40" y1="670.5" x2="1889" y2="670.5" stroke="#d9d9d9" stroke-width="1"/>
<line x1="40" y1="699.5" x2="1889" y2="699.5" stroke="#d9d9d9" stroke-width="1"/>
<line x1="40" y1="728.5" x2="1889" y2="728.5" stroke="#d9d9d9" stroke-width="1"/>
<line x1="40" y1="757.5" x2="1889" y2="757.5" stroke="#d9d9d9" stroke-width="1"/>
<line x1="40" y1="786.5" x2="1889" y2="786.5" stroke="#d9d9d9" stroke-width="1"/>
<line x1="40" y1="815.5" x2="1889" y2="815.5" stroke="#d9d9d9" stroke-width="1"/>
<line x1="40" y1="844.5" x2="1889" y2="844.5" stroke="#d9d9d9" stroke-width="1"/>
<line x1="40" y1="873.5" x2="1889" y2="873.5" stroke="#d9d9d9" stroke-width="1"/>
<line x1="40" y1="902.5" x2="1889" y2="902.5" stroke="#d9d9d9" stroke-width="1"/>
<line x1="40" y1="931.5" x2="1889" y2="931.5" stroke="#d9d9d9" stroke-width="1"/>
<line x1="159.5" y1="323" x2="159.5" y2="953" stroke="#d9d9d9" stroke-width="1"/>
<line x1="279.5" y1="323" x2="279.5" y2="953" stroke="#d9d9d9" stroke-width="1"/>
<line x1="399.5" y1="323" x2="399.5" y2="953" stroke="#d9d9d9" stroke-width="1"/>
<line x1="519.5" y1="323" x2="519.5" y2="953" stroke="#d9d9d9" stroke-width="1"/>
<line x1="639.5" y1="323" x2="639.5" y2="953" stroke="#d9d9d9" stroke-width="1"/>
<line x1="759.5" y1="323" x2="759.5" y2="953" stroke="#d9d9d9" stroke-width="1"/>
<line x1="999.5" y1="323" x2="999.5" y2="953" stroke="#d9d9d9" stroke-width="1"/>
<line x1="1119.5" y1="323" x2="1119.5" y2="953" stroke="#d9d9d9" stroke-width="1"/>
<line x1="1239.5" y1="323" x2="1239.5" y2="953" stroke="#d9d9d9" stroke-width="1"/>
<line x1="1359.5" y1="323" x2="1359.5" y2="953" stroke="#d9d9d9" stroke-width="1"/>
<line x1="1479.5" y1="323" x2="1479.5" y2="953" stroke="#d9d9d9" stroke-width="1"/>
<line x1="1599.5" y1="323" x2="1599.5" y2="953" stroke="#d9d9d9" stroke-width="1"/>
<line x1="1839.5" y1="323" x2="1839.5" y2="953" stroke="#d9d9d9" stroke-width="1"/>
<line x1="879.5" y1="323" x2="879.5" y2="953" stroke="#959595" stroke-width="1" stroke-dasharray="5 3" stroke-dashoffset="4"/>
<line x1="1719.5" y1="323" x2="1719.5" y2="953" stroke="#959595" stroke-width="1" stroke-dasharray="5 3" stroke-dashoffset="4"/>
<line x1="39.5" y1="294" x2="39.5" y2="322" stroke="#ababab" stroke-width="1"/>
<line x1="159.5" y1="294" x2="159.5" y2="322" stroke="#ababab" stroke-width="1"/>
<line x1="279.5" y1="294" x2="279.5" y2="322" stroke="#ababab" stroke-width="1"/>
<line x1="399.5" y1="294" x2="399.5" y2="322" stroke="#ababab" stroke-width="1"/>
<line x1="519.5" y1="294" x2="519.5" y2="322" stroke="#ababab" stroke-width="1"/>
<line x1="639.5" y1="294" x2="639.5" y2="322" stroke="#ababab" stroke-width="1"/>
<line x1="759.5" y1="294" x2="759.5" y2="322" stroke="#ababab" stroke-width="1"/>
<line x1="879.5" y1="294" x2="879.5" y2="322" stroke="#ababab" stroke-width="1"/>
<line x1="999.5" y1="294" x2="999.5" y2="322" stroke="#ababab" stroke-width="1"/>
<line x1="1119.5" y1="294" x2="1119.5" y2="322" stroke="#ababab" stroke-width="1"/>
<line x1="1239.5" y1="294" x2="1239.5" y2="322" stroke="#ababab" stroke-width="1"/>
<line x1="1359.5" y1="294" x2="1359.5" y2="322" stroke="#ababab" stroke-width="1"/>
<line x1="1479.5" y1="294" x2="1479.5" y2="322" stroke="#ababab" stroke-width="1"/>
<line x1="1599.5" y1="294" x2="1599.5" y2="322" stroke="#ababab" stroke-width="1"/>
<line x1="1719.5" y1="294" x2="1719.5" y2="322" stroke="#ababab" stroke-width="1"/>
<line x1="1839.5" y1="294" x2="1839.5" y2="322" stroke="#ababab" stroke-width="1"/>
<line x1="0" y1="322.5" x2="1889" y2="322.5" stroke="#9b9b9b" stroke-width="1"/>
<line x1="39.5" y1="322" x2="39.5" y2="953" stroke="#9b9b9b" stroke-width="1"/>
<line x1="0" y1="351.5" x2="39" y2="351.5" stroke="#ababab" stroke-width="1"/>
<line x1="0" y1="380.5" x2="39" y2="380.5" stroke="#ababab" stroke-width="1"/>
<line x1="0" y1="409.5" x2="39" y2="409.5" stroke="#ababab" stroke-width="1"/>
<line x1="0" y1="438.5" x2="39" y2="438.5" stroke="#ababab" stroke-width="1"/>
<line x1="0" y1="467.5" x2="39" y2="467.5" stroke="#ababab" stroke-width="1"/>
<line x1="0" y1="496.5" x2="39" y2="496.5" stroke="#ababab" stroke-width="1"/>
<line x1="0" y1="525.5" x2="39" y2="525.5" stroke="#ababab" stroke-width="1"/>
<line x1="0" y1="554.5" x2="39" y2="554.5" stroke="#ababab" stroke-width="1"/>
<line x1="0" y1="583.5" x2="39" y2="583.5" stroke="#ababab" stroke-width="1"/>
<line x1="0" y1="612.5" x2="39" y2="612.5" stroke="#ababab" stroke-width="1"/>
<line x1="0" y1="641.5" x2="39" y2="641.5" stroke="#ababab" stroke-width="1"/>
<line x1="0" y1="670.5" x2="39" y2="670.5" stroke="#ababab" stroke-width="1"/>
<line x1="0" y1="699.5" x2="39" y2="699.5" stroke="#ababab" stroke-width="1"/>
<line x1="0" y1="728.5" x2="39" y2="728.5" stroke="#ababab" stroke-width="1"/>
<line x1="0" y1="757.5" x2="39" y2="757.5" stroke="#ababab" stroke-width="1"/>
<line x1="0" y1="786.5" x2="39" y2="786.5" stroke="#ababab" stroke-width="1"/>
<line x1="0" y1="815.5" x2="39" y2="815.5" stroke="#ababab" stroke-width="1"/>
<line x1="0" y1="844.5" x2="39" y2="844.5" stroke="#ababab" stroke-width="1"/>
<line x1="0" y1="873.5" x2="39" y2="873.5" stroke="#ababab" stroke-width="1"/>
<line x1="0" y1="902.5" x2="39" y2="902.5" stroke="#ababab" stroke-width="1"/>
<line x1="0" y1="931.5" x2="39" y2="931.5" stroke="#ababab" stroke-width="1"/>
<line x1="399" y1="321.5" x2="520" y2="321.5" stroke="#217346" stroke-width="2"/>
<line x1="38.5" y1="496" x2="38.5" y2="525" stroke="#217346" stroke-width="2"/>
<line x1="1889.5" y1="322" x2="1889.5" y2="953" stroke="#9b9b9b" stroke-width="1"/>
<polygon points="36,298 36,319 15,319" fill="#b4b4b4"/>
<rect x="399" y="496" width="121" height="30" fill="none" stroke="#217346" stroke-width="2"/>
<rect x="515" y="521" width="8" height="8" fill="#fff"/>
<rect x="516" y="522" width="6" height="6" fill="#217346"/>
<polygon points="164.7,356.4 218.25,409.75 185,443 123.2,380.8" fill="#324c8e"/>
<polygon points="197.5,356.4 239.1,380.5 110,509.6 93.3,499.8 93.3,459.7" fill="#1f805d"/>
<polygon points="116.3,384.7 245,513.5 197.5,541.4 93.3,437.1 93.3,397.5" fill="#e01437"/>
<polygon points="246.4,384.7 268.9,397.5 268.9,437.6 164.7,541.4 117.3,513.5" fill="#fec608"/>
<polygon points="215.25,406.75 268.9,460.2 268.9,499.8 252.3,509.6 182,440" fill="#324c8e"/>
<polygon points="1899,310 1910,310 1904.5,304.5" fill="#777"/>
<polygon points="1899,940 1910,940 1904.5,945.5" fill="#777"/>
<line x1="0" y1="953.5" x2="118" y2="953.5" stroke="#9b9b9b" stroke-width="1"/><line x1="222" y1="953.5" x2="1890" y2="953.5" stroke="#9b9b9b" stroke-width="1"/>
<polygon points="35,963 35,977 29,970" fill="#bdbdbd"/><polygon points="63,963 63,977 69,970" fill="#bdbdbd"/>
<circle cx="273" cy="969.8" r="10.6" fill="none" stroke="#6d6d6d" stroke-width="1.1"/><path d="M273 964 V975.6 M267.2 969.8 H278.8" stroke="#6d6d6d" stroke-width="1.6"/>
<rect x="1148" y="962.5" width="3" height="3" fill="#9a9a9a"/>
<rect x="1148" y="968" width="3" height="3" fill="#9a9a9a"/>
<rect x="1148" y="973.5" width="3" height="3" fill="#9a9a9a"/>
<polygon points="1185,964 1185,975 1177.5,969.5" fill="#777"/><polygon points="1875,964 1875,975 1882.5,969.5" fill="#777"/>
<line x1="0" y1="987.5" x2="1920" y2="987.5" stroke="#c6c6c6" stroke-width="1"/>
<g fill="none" stroke="#777" stroke-width="1.2">
<rect x="1545.6" y="994.6" width="18" height="17.6"/><path d="M1551.6 994.6 V1012.2 M1557.6 994.6 V1012.2 M1545.6 1000.5 H1563.6 M1545.6 1006.4 H1563.6"/>
<rect x="1590.6" y="994.6" width="18" height="17.6"/><rect x="1593.6" y="997.6" width="12" height="11.6"/><path d="M1596 1001 H1603 M1596 1003.5 H1603 M1596 1006 H1603"/>
<rect x="1635.6" y="994.6" width="18" height="17.6"/><path d="M1635.6 1003.6 H1647.6 V994.6 M1641.6 994.6 V1003.6"/>
</g>
<rect x="1672.5" y="1002" width="11.5" height="2.2" fill="#777"/>
<rect x="1690" y="1002.6" width="148" height="1.4" fill="#a6a6a6"/>
<rect x="1760" y="995" width="8" height="17" fill="#777"/>
<path d="M1849.5 996.5 V1010 M1843 1003.2 H1856" stroke="#777" stroke-width="2.2"/>
</svg>
<div class="r" style="left:587px;top:39px;width:153px;height:68px;box-sizing:border-box;border:5px solid #ec1c24;"></div>
<div class="r" style="left:179px;top:88px;width:145px;height:151px;box-sizing:border-box;border:5px solid #ec1c24;"></div>
</body></html>
